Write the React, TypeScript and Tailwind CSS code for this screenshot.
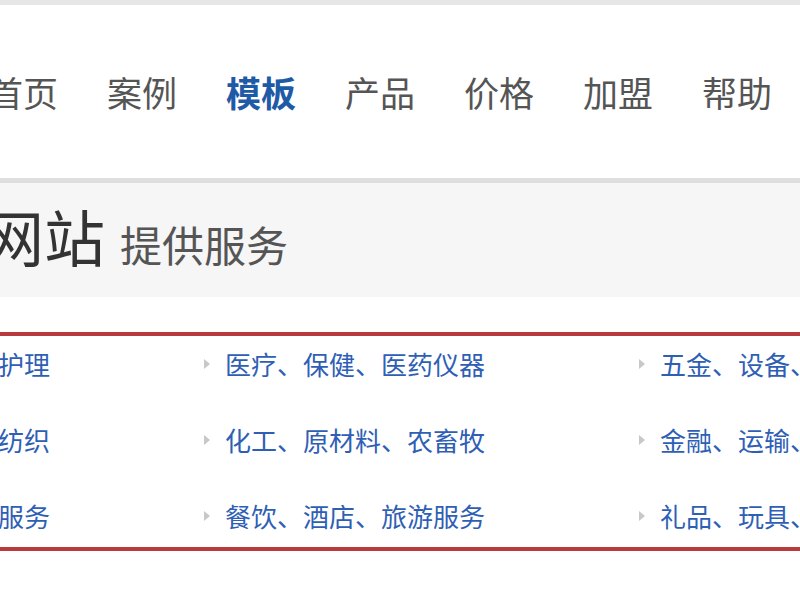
import React from 'react';

const navItems = ['首页', '案例', '模板', '产品', '价格', '加盟', '帮助'];

const rows = [
  ['美容、美发、健康护理', '医疗、保健、医药仪器', '五金、设备、机械制造'],
  ['服装、鞋帽、皮革纺织', '化工、原材料、农畜牧', '金融、运输、物流快递'],
  ['家政、物流、商务服务', '餐饮、酒店、旅游服务', '礼品、玩具、工艺饰品'],
];

const Arrow: React.FC = () => (
  <svg width="6" height="10" viewBox="0 0 6 10" className="shrink-0">
    <path d="M0 0 L6 5 L0 10 Z" fill="#c8c8c8" />
  </svg>
);

const App: React.FC = () => {
  return (
    <div
      className="w-[800px] h-[600px] overflow-hidden bg-white"
      style={{ fontFamily: '"Noto Sans CJK SC", "Noto Sans", sans-serif' }}
    >
      {/* header nav */}
      <div className="border-t-[5px] border-[#e6e6e6] h-[178px] flex items-center">
        <nav className="flex gap-[49px] ml-[-12px] whitespace-nowrap">
          {navItems.map((item) => (
            <span
              key={item}
              className={
                item === '模板'
                  ? 'text-[35px] leading-none font-semibold text-[#1f5aa6]'
                  : 'text-[35px] leading-none text-[#555555]'
              }
            >
              {item}
            </span>
          ))}
        </nav>
      </div>
      <div className="h-[5px] bg-[#dedede]" />

      {/* title band */}
      <div className="h-[114px] bg-[#f6f6f6] flex items-baseline pt-[22px]">
        <div className="w-[105px] flex justify-end whitespace-nowrap">
          <span className="text-[61px] leading-none text-[#333333]">为各行业网站</span>
        </div>
        <span className="ml-[15px] text-[42px] leading-none text-[#555555] whitespace-nowrap">提供服务</span>
      </div>

      {/* category box */}
      <div className="pt-[35px]">
        <div className="mx-[-10px] border-[4px] border-[#b83a3f] pt-[13px] pb-[16px]">
          <div className="flex flex-col gap-[46px] ml-[-225px]">
            {rows.map((row, i) => (
              <div key={i} className="flex whitespace-nowrap">
                {row.map((cell) => (
                  <div key={cell} className="w-[435px] shrink-0 flex items-center gap-[15px] h-[30px]">
                    <Arrow />
                    <span className="text-[26px] leading-[30px] text-[#2f5fb5]">{cell}</span>
                  </div>
                ))}
              </div>
            ))}
          </div>
        </div>
      </div>
    </div>
  );
};

export default App;
